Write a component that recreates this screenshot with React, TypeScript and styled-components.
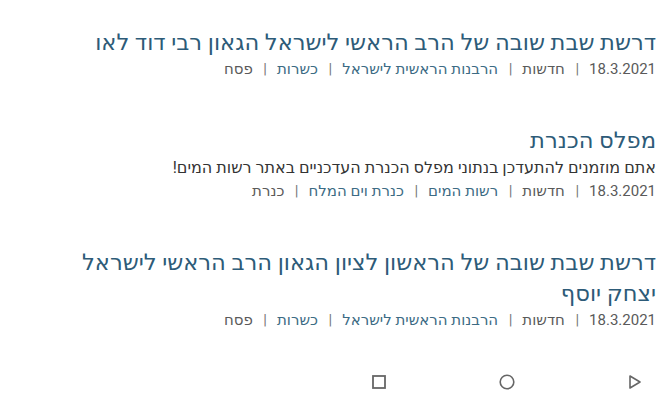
import React from 'react'
import styled, { createGlobalStyle } from 'styled-components'

const GlobalStyle = createGlobalStyle`
    html, body {
        margin: 0;
        padding: 0;
        background: #ffffff;
    }
    body {
        font-family: Roboto, "Noto Sans", "DejaVu Sans", sans-serif;
    }
`

const Page = styled.div`
    direction: rtl;
    min-height: 100vh;
    display: flex;
    flex-direction: column;
    box-sizing: border-box;
`

const Feed = styled.main`
    display: flex;
    flex-direction: column;
    gap: 45px;
    padding: 27px 12px 0 48px;
`

const Article = styled.article`
    display: flex;
    flex-direction: column;
`

const Title = styled.h2`
    margin: 0;
    font-size: 22.6px;
    line-height: 31px;
    font-weight: 400;
    color: #2d5b78;
`

const Excerpt = styled.p`
    margin: 0;
    font-size: 16px;
    line-height: 24px;
    color: #333333;
`

const Meta = styled.div`
    display: flex;
    align-items: center;
    font-size: 15px;
    line-height: 22px;
    color: #5a5a5a;
`

const MetaItem = styled.span<{ $link?: boolean }>`
    color: ${(p) => (p.$link ? '#3c6b84' : '#5a5a5a')};
`

const Sep = styled.span`
    color: #777777;
    padding: 0 10px 0 10.5px;
`

const NavBar = styled.nav`
    margin-top: auto;
    height: 44px;
    display: flex;
    align-items: center;
    justify-content: flex-start;
    gap: 80px;
    padding-right: 9px;
`

const NavButton = styled.button`
    width: 48px;
    height: 44px;
    display: flex;
    align-items: center;
    justify-content: center;
    background: transparent;
    border: none;
    padding: 0;
    color: #666666;
`

interface IPost {
    title: string
    excerpt?: string
    meta: { text: string; link?: boolean }[]
}

const posts: IPost[] = [
    {
        title: 'דרשת שבת שובה של הרב הראשי לישראל הגאון רבי דוד לאו',
        meta: [
            { text: '18.3.2021' },
            { text: 'חדשות' },
            { text: 'הרבנות הראשית לישראל', link: true },
            { text: 'כשרות', link: true },
            { text: 'פסח' },
        ],
    },
    {
        title: 'מפלס הכנרת',
        excerpt: 'אתם מוזמנים להתעדכן בנתוני מפלס הכנרת העדכניים באתר רשות המים!',
        meta: [
            { text: '18.3.2021' },
            { text: 'חדשות' },
            { text: 'רשות המים', link: true },
            { text: 'כנרת וים המלח', link: true },
            { text: 'כנרת' },
        ],
    },
    {
        title: 'דרשת שבת שובה של הראשון לציון הגאון הרב הראשי לישראל יצחק יוסף',
        meta: [
            { text: '18.3.2021' },
            { text: 'חדשות' },
            { text: 'הרבנות הראשית לישראל', link: true },
            { text: 'כשרות', link: true },
            { text: 'פסח' },
        ],
    },
]

const BackIcon = () => (
    <svg width="14" height="16" viewBox="0 0 14 16" fill="none">
        <path d="M2 2 L12 8 L2 14 Z" stroke="currentColor" strokeWidth="1.6" strokeLinejoin="round" />
    </svg>
)

const HomeIcon = () => (
    <svg width="18" height="18" viewBox="0 0 18 18" fill="none">
        <circle cx="9" cy="9" r="6.8" stroke="currentColor" strokeWidth="1.6" />
    </svg>
)

const RecentIcon = () => (
    <svg width="16" height="16" viewBox="0 0 16 16" fill="none">
        <rect x="2" y="2" width="12" height="12" stroke="currentColor" strokeWidth="1.8" />
    </svg>
)

export default function App() {
    return (
        <Page>
            <GlobalStyle />
            <Feed>
                {posts.map((post, i) => (
                    <Article key={i}>
                        <Title>{post.title}</Title>
                        {post.excerpt && <Excerpt>{post.excerpt}</Excerpt>}
                        <Meta>
                            {post.meta.map((m, j) => (
                                <React.Fragment key={j}>
                                    {j > 0 && <Sep>|</Sep>}
                                    <MetaItem $link={m.link}>{m.text}</MetaItem>
                                </React.Fragment>
                            ))}
                        </Meta>
                    </Article>
                ))}
            </Feed>
            <NavBar>
                <NavButton><BackIcon /></NavButton>
                <NavButton><HomeIcon /></NavButton>
                <NavButton><RecentIcon /></NavButton>
            </NavBar>
        </Page>
    )
}
